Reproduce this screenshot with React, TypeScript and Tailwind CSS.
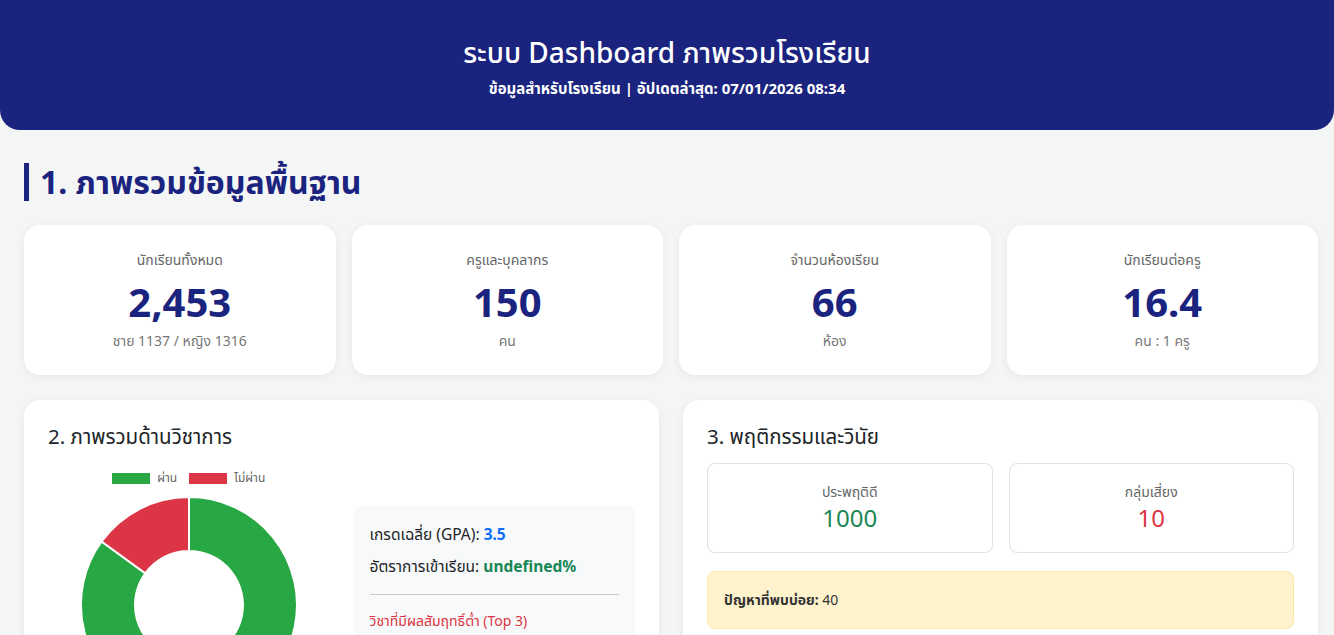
const font = "font-['Noto_Sans','Noto_Sans_Thai','Liberation_Sans',sans-serif]"

const stats = [
	{ label: "นักเรียนทั้งหมด", value: "2,453", sub: "ชาย 1137 / หญิง 1316" },
	{ label: "ครูและบุคลากร", value: "150", sub: "คน" },
	{ label: "จำนวนห้องเรียน", value: "66", sub: "ห้อง" },
	{ label: "นักเรียนต่อครู", value: "16.4", sub: "คน : 1 ครู" },
]

function Donut() {
	return (
		<svg width="216" height="216" viewBox="0 0 216 216">
			<path
				d="M108 0 A108 108 0 1 1 20.6 44.5 L64.3 76.25 A54 54 0 1 0 108 54 Z"
				fill="#28a745"
				stroke="#fff"
				strokeWidth="2"
			/>
			<path
				d="M20.6 44.5 A108 108 0 0 1 108 0 L108 54 A54 54 0 0 0 64.3 76.25 Z"
				fill="#dc3545"
				stroke="#fff"
				strokeWidth="2"
			/>
		</svg>
	)
}

export default function App() {
	return (
		<div className={`${font} min-h-screen bg-[#f4f6f6] pb-10`}>
			<header className="bg-[#1a237e] rounded-b-[20px] h-[130px] pt-8 text-center text-white">
				<h1 className="text-[28px] leading-[40px] font-medium">
					ระบบ Dashboard ภาพรวมโรงเรียน
				</h1>
				<p className="mt-[5px] text-[15px] leading-[22px] font-bold">
					ข้อมูลสำหรับโรงเรียน | อัปเดตล่าสุด: 07/01/2026 08:34
				</p>
			</header>

			<main className="pl-6 pr-4">
				<h2 className="mt-[33px] border-l-[5px] border-[#1a237e] pl-[11px] h-[38px] text-[32px] leading-[38px] font-bold text-[#1a237e]">
					1. ภาพรวมข้อมูลพื้นฐาน
				</h2>

				<div className="mt-6 grid grid-cols-4 gap-4">
					{stats.map((s) => (
						<div
							key={s.label}
							className="bg-white rounded-2xl h-[150px] pt-[25px] text-center shadow-[0_2px_8px_rgba(0,0,0,0.06)]"
						>
							<div className="text-sm leading-5 text-[#666]">{s.label}</div>
							<div className="mt-2 text-[40px] leading-[48px] font-bold text-[#1a237e]">
								{s.value}
							</div>
							<div className="mt-[5px] text-sm leading-5 text-[#777]">{s.sub}</div>
						</div>
					))}
				</div>

				<div className="mt-[25px] grid grid-cols-2 gap-6">
					<section className="bg-white rounded-2xl p-6 shadow-[0_2px_8px_rgba(0,0,0,0.06)]">
						<h3 className="text-[20.5px] leading-6 text-[#212529]">2. ภาพรวมด้านวิชาการ</h3>
						<div className="mt-4 grid grid-cols-2 gap-6">
							<div className="flex flex-col items-center">
								<div className="h-7 flex items-center text-xs text-[#666]">
									<span className="w-[38px] h-[11px] bg-[#28a745]" />
									<span className="ml-[7px]">ผ่าน</span>
									<span className="ml-[12px] w-[38px] h-[11px] bg-[#dc3545]" />
									<span className="ml-[7px]">ไม่ผ่าน</span>
								</div>
								<div className="mt-[5px]">
									<Donut />
								</div>
							</div>
							<div className="self-start mt-[42px] bg-[#f8f9fa] rounded-lg p-4 text-[15.5px] leading-6 text-[#212529]">
								<p>
									เกรดเฉลี่ย (GPA): <b className="text-[#0d6efd]">3.5</b>
								</p>
								<p className="mt-2">
									อัตราการเข้าเรียน: <b className="text-[#198754]">undefined%</b>
								</p>
								<hr className="my-4 border-[#c8cacc]" />
								<p className="text-sm text-[#dc3545]">วิชาที่มีผลสัมฤทธิ์ต่ำ (Top 3)</p>
								<ul className="mt-2 text-sm text-[#555]">
									<li>-</li>
								</ul>
							</div>
						</div>
					</section>

					<section className="bg-white rounded-2xl p-6 shadow-[0_2px_8px_rgba(0,0,0,0.06)]">
						<h3 className="text-[20.5px] leading-6 text-[#212529]">3. พฤติกรรมและวินัย</h3>
						<div className="mt-[15px] grid grid-cols-2 gap-4">
							<div className="h-[90px] pt-[18px] border border-[#dee2e6] rounded-lg text-center">
								<div className="text-sm leading-5 text-[#666]">ประพฤติดี</div>
								<div className="text-2xl leading-8 text-[#198754]">1000</div>
							</div>
							<div className="h-[90px] pt-[18px] border border-[#dee2e6] rounded-lg text-center">
								<div className="text-sm leading-5 text-[#666]">กลุ่มเสี่ยง</div>
								<div className="text-2xl leading-8 text-[#dc3545]">10</div>
							</div>
						</div>
						<div className="mt-[18px] bg-[#fff3cd] border border-[#ffe69c] rounded-lg px-4 py-4 text-sm leading-6 text-[#333]">
							<b>ปัญหาที่พบบ่อย:</b> 40
						</div>
					</section>
				</div>
			</main>
		</div>
	)
}
